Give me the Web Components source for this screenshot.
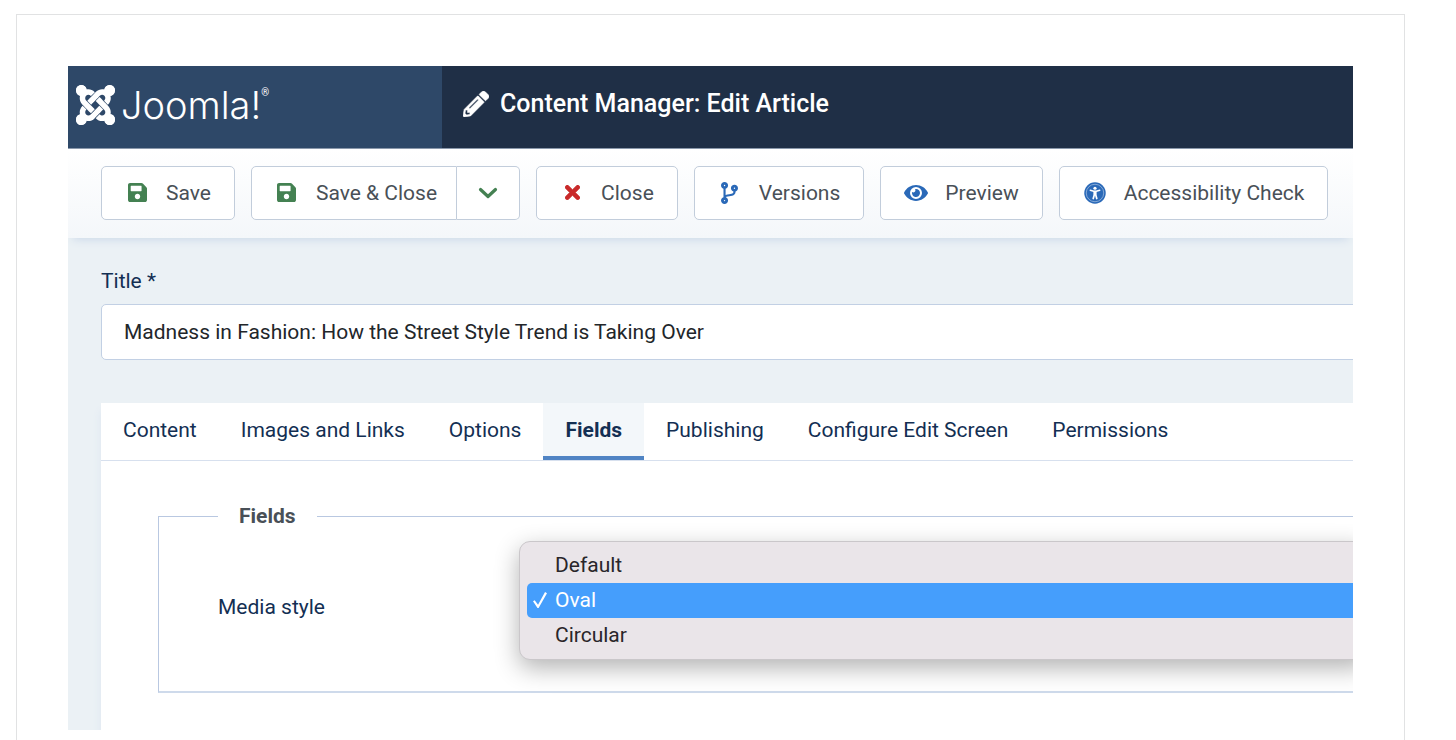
<!DOCTYPE html>
<html lang="en">
<head>
<meta charset="utf-8">
<title>Content Manager: Edit Article</title>
<style>
  body { margin: 0; padding: 14px 51px 0 16px; background: #fff; color: #495057; font: 400 21px/28px Roboto, "Liberation Sans", sans-serif; }
</style>
</head>
<body>
<shot-frame>
  <admin-header heading="Content Manager: Edit Article"></admin-header>
  <admin-toolbar>
    <tool-button icon="save" tone="green">Save</tool-button>
    <split-button icon="save" tone="green">Save &amp; Close</split-button>
    <tool-button icon="times" tone="red">Close</tool-button>
    <tool-button icon="branch" tone="blue">Versions</tool-button>
    <tool-button icon="eye" tone="blue">Preview</tool-button>
    <tool-button icon="access" tone="blue">Accessibility Check</tool-button>
  </admin-toolbar>
  <edit-form>
    <title-field label="Title *" value="Madness in Fashion: How the Street Style Trend is Taking Over"></title-field>
    <tab-panel>
      <tab-item>Content</tab-item>
      <tab-item>Images and Links</tab-item>
      <tab-item>Options</tab-item>
      <tab-item selected>Fields</tab-item>
      <tab-item>Publishing</tab-item>
      <tab-item>Configure Edit Screen</tab-item>
      <tab-item>Permissions</tab-item>
      <field-group slot="panel" legend="Fields">
        <choice-field label="Media style"></choice-field>
      </field-group>
    </tab-panel>
  </edit-form>
</shot-frame>

<script>
const ICONS = {
  save: ['0 32 448 448', 19, 19, '<path d="M433.941 129.941l-83.882-83.882A48 48 0 0 0 316.118 32H48C21.49 32 0 53.49 0 80v352c0 26.51 21.49 48 48 48h352c26.51 0 48-21.49 48-48V163.882a48 48 0 0 0-14.059-33.941zM224 416c-35.346 0-64-28.654-64-64 0-35.346 28.654-64 64-64s64 28.654 64 64c0 35.346-28.654 64-64 64zm96-304.52V212c0 6.627-5.373 12-12 12H76c-6.627 0-12-5.373-12-12V108c0-6.627 5.373-12 12-12h228.52c3.183 0 6.235 1.264 8.485 3.515l3.48 3.48A11.996 11.996 0 0 1 320 111.48z"/>'],
  times: ['0 80 352 352', 15, 15, '<path stroke="currentColor" stroke-width="16" d="M242.72 256l100.07-100.07c12.28-12.28 12.28-32.19 0-44.48l-22.24-22.24c-12.28-12.28-32.19-12.28-44.48 0L176 189.28 75.93 89.21c-12.28-12.28-32.19-12.28-44.48 0L9.21 111.45c-12.28 12.28-12.28 32.19 0 44.48L109.28 256 9.21 356.07c-12.28 12.28-12.28 32.19 0 44.48l22.24 22.24c12.28 12.28 32.2 12.28 44.48 0L176 322.72l100.07 100.07c12.28 12.28 32.2 12.28 44.48 0l22.24-22.24c12.28-12.28 12.28-32.19 0-44.48L242.72 256z"/>'],
  branch: ['0 0 384 512', 17, 22, '<path d="M384 144c0-44.2-35.8-80-80-80s-80 35.8-80 80c0 36.4 24.3 67.1 57.5 76.8-.6 16.1-4.2 28.5-11 36.9-15.4 19.2-49.3 22.4-85.2 25.7-28.2 2.6-57.4 5.4-81.3 16.9v-144c32.5-10.2 56-40.5 56-76.3 0-44.2-35.8-80-80-80S0 35.8 0 80c0 35.8 23.5 66.1 56 76.3v199.3C23.5 365.9 0 396.2 0 432c0 44.2 35.8 80 80 80s80-35.8 80-80c0-34-21.2-63.1-51.2-74.6 3.1-5.2 7.8-9.8 14.9-13.4 16.2-8.2 40.4-10.4 66.1-12.8 42.2-3.9 90-8.4 118.2-43.4 14-17.4 21.1-39.8 21.6-67.9 31.6-10.8 54.4-40.7 54.4-75.9zM80 64c8.8 0 16 7.2 16 16s-7.2 16-16 16-16-7.2-16-16 7.2-16 16-16zm0 384c-8.8 0-16-7.2-16-16s7.2-16 16-16 16 7.2 16 16-7.2 16-16 16zm224-320c8.8 0 16 7.2 16 16s-7.2 16-16 16-16-7.2-16-16 7.2-16 16-16z"/>'],
  eye: ['0 64 576 384', 24, 16, '<path d="M572.52 241.4C518.29 135.59 410.93 64 288 64S57.68 135.64 3.48 241.41a32.35 32.35 0 0 0 0 29.19C57.71 376.41 165.07 448 288 448s230.32-71.64 284.52-177.41a32.35 32.35 0 0 0 0-29.19zM288 400a144 144 0 1 1 144-144 143.93 143.93 0 0 1-144 144zm0-240a95.31 95.31 0 0 0-25.31 3.79 47.85 47.85 0 0 1-66.9 66.9A95.78 95.78 0 1 0 288 160z"/>'],
  access: ['0 0 44 44', 22, 22, '<circle cx="22" cy="22" r="21.5"/><g fill="none" stroke="#fff"><circle cx="22" cy="22" r="17.5" stroke-width="1.2" stroke-opacity=".7"/><path d="M12.5 16.5l7 2h5l7-2" stroke-width="3" stroke-linecap="round" stroke-linejoin="round"/><path d="M20.5 19v7l-2 7M23.5 19v7l2 7" stroke-width="3.5" stroke-linecap="round"/></g><circle cx="22" cy="12.5" r="3.2" fill="#fff"/>'],
  chevron: ['0 0 20 14', 20, 14, '<path d="M2.5 3.5L10 10.5L17.5 3.5" fill="none" stroke="currentColor" stroke-width="3.2" stroke-linecap="round" stroke-linejoin="round"/>'],
  pencil: ['0 0 512 512', 26, 26, '<path stroke="currentColor" stroke-width="10" d="M497.9 142.1l-46.1 46.1c-4.7 4.7-12.3 4.7-17 0l-111-111c-4.7-4.7-4.7-12.3 0-17l46.1-46.1c18.7-18.7 49.1-18.7 67.9 0l60.1 60.1c18.8 18.7 18.8 49.1 0 67.9zM284.2 99.8L21.6 362.4.4 483.9c-2.9 16.4 11.4 30.6 27.8 27.8l121.5-21.3 262.6-262.6c4.7-4.7 4.7-12.3 0-17l-111-111c-4.8-4.7-12.4-4.7-17.1 0zM124.1 339.9c-5.5-5.5-5.5-14.3 0-19.8l154-154c5.5-5.5 14.3-5.5 19.8 0s5.5 14.3 0 19.8l-154 154c-5.5 5.5-14.3 5.5-19.8 0zM88 424h48v36.3l-64.5 11.3-31.1-31.1L51.7 376H88v48z"/>'],
  joomla: ['0 32 448 448', 39, 40, '<path d="M.6 92.1C.6 58.8 27.4 32 60.4 32c30 0 54.5 21.9 59.2 50.2 32.6-7.6 67.1.6 96.5 30l-44.3 44.3c-20.5-20.5-42.6-16.3-55.4-3.5-14.3 14.3-14.3 37.9 0 52.2l99.5 99.5-44 44.3c-87.7-87.2-49.7-49.7-99.8-99.7-26.8-26.5-35-64.8-24.8-98.9C20.4 144.6.6 120.7.6 92.1zm129.5 116.4l44.3 44.3c10-10 89.7-89.7 99.7-99.8 14.3-14.3 37.6-14.3 51.9 0 12.8 12.8 17 35-3.5 55.4l44 44.3c31.2-31.2 38.5-67.6 28.9-101.2 29.2-4.1 51.9-29.2 51.9-59.5 0-33.2-26.8-60.1-59.8-60.1-30.3 0-55.4 22.5-59.5 51.6-33.8-9.9-71.7-1.5-98.3 25.1-18.3 19.1-71.1 71.5-99.6 99.9zm266.3 152.2c8.2-32.7-.9-68.5-26.3-93.9-11.8-12.2 5 4.7-99.5-99.7l-44.3 44.3 99.7 99.7c14.3 14.3 14.3 37.6 0 51.9-12.8 12.8-35 17-55.4-3.5l-44 44.3c27.6 30.2 68 38.8 102.7 28 5.5 27.4 29.7 48.1 58.9 48.1 33 0 59.8-26.8 59.8-60.1 0-30.2-22.5-55-51.6-59.1zm-84.3-53.1l-44-44.3c-87 86.4-50.4 50.4-99.7 99.8-14.3 14.3-37.6 14.3-51.9 0-13.1-13.4-16.9-35.3 3.2-55.4l-44-44.3c-30.2 30.2-38 65.2-29.5 98.3-26.7 6-46.2 29.9-46.2 58.2C0 453.2 26.8 480 59.8 480c28.6 0 52.5-19.8 58.6-46.7 32.7 8.2 68.5-.6 94.2-26 32.1-32 12.2-12.4 99.5-99.7z"/><circle cx="62" cy="94" r="62"/><circle cx="386" cy="94" r="62"/><circle cx="62" cy="418" r="62"/><circle cx="386" cy="418" r="62"/>']
};

function define(name, render) {
  customElements.define(name, class extends HTMLElement {
    connectedCallback() {
      if (this.shadowRoot) return;
      this.attachShadow({ mode: 'open' }).innerHTML = render(this);
    }
  });
}

define('ui-icon', el => {
  const [box, w, h, shape] = ICONS[el.getAttribute('name')];
  return `<style>:host{display:inline-flex;justify-content:center;align-items:center;flex:none}svg{display:block;fill:currentColor}</style>
    <svg viewBox="${box}" width="${w}" height="${h}" preserveAspectRatio="none" aria-hidden="true">${shape}</svg>`;
});

define('shot-frame', () => `<style>
    :host{display:block;border:1px solid #e1e2e3;border-bottom:0;padding:51px 51px 10px}
    .screen{overflow:hidden;background:#ebf1f5}
  </style><div class="screen"><slot></slot></div>`);

define('admin-header', el => `<style>
    :host{display:grid;grid-template-columns:374px 1fr;height:82px;border-bottom:1px solid #8a98ab;background:#1f2f46;color:#fff}
    .brand{display:flex;align-items:center;gap:6px;padding:0 8px 4px;background:#2e4868;color:#fff;text-decoration:none;box-sizing:border-box}
    .word{display:flex;align-items:flex-start;font:300 38px/40px Inter,"Open Sans",sans-serif}
    .reg{font:400 10px/16px Roboto,sans-serif}
    .bar{display:flex;align-items:center;gap:11px;padding:0 21px 6px}
    h1{margin:0;font:500 25px/32px Roboto,sans-serif}
  </style>
  <a class="brand" href="#home" aria-label="Joomla!"><ui-icon name="joomla"></ui-icon><span class="word"><span>Joomla!</span><span class="reg">®</span></span></a>
  <div class="bar"><ui-icon name="pencil"></ui-icon><h1>${el.getAttribute('heading')}</h1></div>`);

define('admin-toolbar', () => `<style>
    :host{display:flex;gap:16px;padding:17px 33px 18px;background:linear-gradient(#fff,#f4f7fa);box-shadow:0 6px 9px -5px #c8d6e8;position:relative}
  </style><slot></slot>`);

const BUTTON = `
    :host{display:flex;flex:none}
    :host([tone=green]){--tone:#448152}
    :host([tone=red]){--tone:#c92a2a}
    :host([tone=blue]){--tone:#2a69b8}
    button{display:flex;align-items:center;gap:15px;height:54px;box-sizing:border-box;padding:0 23px 1px 21px;border:1px solid #c2cddb;border-radius:5px;background:#fff;color:#495057;font:inherit;white-space:nowrap}
    ui-icon{color:var(--tone);width:28px}`;

define('tool-button', el => `<style>${BUTTON}</style>
  <button type="button"><ui-icon name="${el.getAttribute('icon')}"></ui-icon><slot></slot></button>`);

define('split-button', el => `<style>${BUTTON}
    .main{border-radius:5px 0 0 5px;padding-right:19px}
    .more{border-radius:0 5px 5px 0;border-left:0;padding:0 17px 1px}
  </style>
  <button class="main" type="button"><ui-icon name="${el.getAttribute('icon')}"></ui-icon><slot></slot></button>
  <button class="more" type="button" aria-label="More save options"><ui-icon name="chevron"></ui-icon></button>`);

define('edit-form', () => `<style>:host{display:block;padding:29px 0 0 33px}</style><slot></slot>`);

define('title-field', el => `<style>
    :host{display:block;margin-right:-16px;color:#132f53}
    label{display:block;margin-bottom:9px}
    input{display:block;width:100%;height:56px;box-sizing:border-box;padding:0 22px;border:1px solid #c2d0e4;border-radius:5px;background:#fff;color:#22262a;font:inherit}
  </style><label for="title">${el.getAttribute('label')}</label><input id="title" type="text" value="${el.getAttribute('value')}">`);

define('tab-panel', () => `<style>
    :host{display:block;margin-top:43px;background:#fff;box-shadow:0 8px 8px #dde6f1}
    .tabs{display:flex;border-bottom:1px solid #d7e0ee}
    .panel{padding:41px 0 37px 57px}
  </style><div class="tabs" role="tablist"><slot></slot></div><div class="panel" role="tabpanel"><slot name="panel"></slot></div>`);

define('tab-item', el => `<style>
    :host{display:block;flex:none}
    button{display:block;height:57px;padding:0 22px;border:0;border-bottom:4px solid transparent;background:none;color:#132f53;font:inherit;white-space:nowrap}
    :host([selected]) button{background:#f3f7fa;border-bottom-color:#5084c4;font-weight:700}
  </style><button type="button" role="tab" aria-selected="${el.hasAttribute('selected')}"><slot></slot></button>`);

define('field-group', el => `<style>
    :host{display:block;margin-right:-16px}
    fieldset{margin:0;padding:11px 0 31px 59px;border:1px solid #b9c8e1;border-bottom:2px solid #cedaeb;min-width:0}
    legend{padding:0 21px;color:#495057;font-weight:700}
  </style><fieldset><legend>${el.getAttribute('legend')}</legend><slot></slot></fieldset>`);

define('choice-field', el => `<style>
    :host{display:grid;grid-template-columns:301px 1fr;align-items:center;color:#132f53}
    label{padding-top:12px}
    select{display:block;width:100%;height:119px;box-sizing:border-box;margin:0;padding:6px 7px 7px;overflow:hidden;appearance:none;border:1px solid #cac7ca;border-radius:11px;outline:0;background:#eae5e9;box-shadow:0 8px 24px rgba(0,0,0,.3);color:#29262a;font:inherit}
    option{display:flex;align-items:center;height:35px;min-height:35px;box-sizing:border-box;padding:0 0 1px 28px;border-radius:5px;color:#29262a;font:inherit}
    option:checked{padding-left:6px;background:#459efc linear-gradient(#459efc,#459efc);color:#fff}
    option:checked::before{content:"";width:14px;height:16px;margin-right:8px;background:#fff;clip-path:polygon(0 58%,12% 52%,36% 80%,86% 0,100% 8%,40% 100%,32% 100%)}
  </style>
  <label for="style">${el.getAttribute('label')}</label>
  <select id="style" size="3"><option>Default</option><option selected>Oval</option><option>Circular</option></select>`);
</script>
</body>
</html>
